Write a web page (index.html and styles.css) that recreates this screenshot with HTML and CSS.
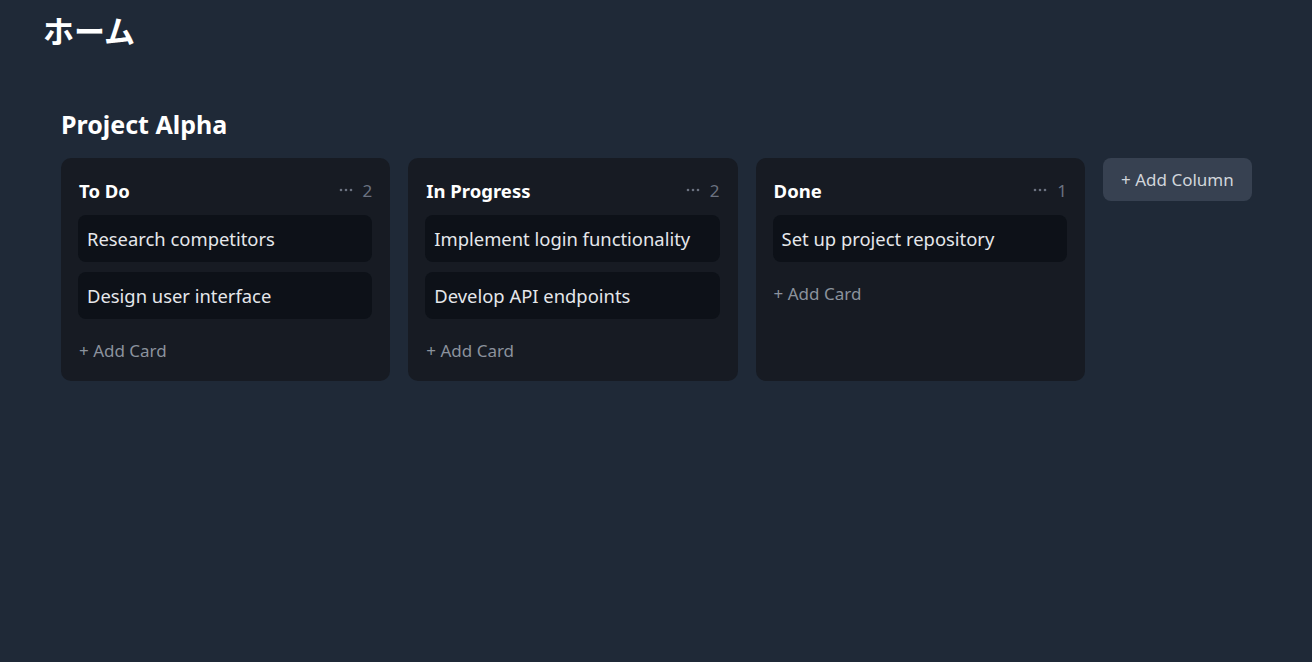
FILE: index.html
```html
<!DOCTYPE html>
<html lang="ja">
<head>
<meta charset="utf-8">
<title>ホーム</title>
<link rel="stylesheet" href="styles.css">
</head>
<body>
<header class="top">
  <h1 class="page-title">ホーム</h1>
</header>
<main class="board">
  <h2 class="board-title">Project Alpha</h2>
  <div class="columns">
    <section class="column">
      <div class="col-head">
        <span class="col-name">To Do</span>
        <span class="col-meta"><svg class="dots" width="14" height="4" viewBox="0 0 14 4"><circle cx="2" cy="2" r="1.3"/><circle cx="7" cy="2" r="1.3"/><circle cx="12" cy="2" r="1.3"/></svg><span class="count">2</span></span>
      </div>
      <div class="cards">
        <div class="card">Research competitors</div>
        <div class="card">Design user interface</div>
      </div>
      <div class="add-card">+ Add Card</div>
    </section>
    <section class="column">
      <div class="col-head">
        <span class="col-name">In Progress</span>
        <span class="col-meta"><svg class="dots" width="14" height="4" viewBox="0 0 14 4"><circle cx="2" cy="2" r="1.3"/><circle cx="7" cy="2" r="1.3"/><circle cx="12" cy="2" r="1.3"/></svg><span class="count">2</span></span>
      </div>
      <div class="cards">
        <div class="card">Implement login functionality</div>
        <div class="card">Develop API endpoints</div>
      </div>
      <div class="add-card">+ Add Card</div>
    </section>
    <section class="column">
      <div class="col-head">
        <span class="col-name">Done</span>
        <span class="col-meta"><svg class="dots" width="14" height="4" viewBox="0 0 14 4"><circle cx="2" cy="2" r="1.3"/><circle cx="7" cy="2" r="1.3"/><circle cx="12" cy="2" r="1.3"/></svg><span class="count">1</span></span>
      </div>
      <div class="cards">
        <div class="card">Set up project repository</div>
      </div>
      <div class="add-card">+ Add Card</div>
    </section>
    <button class="add-column">+ Add Column</button>
  </div>
</main>
</body>
</html>
```
FILE: styles.css
```css
html, body {
  margin: 0;
  padding: 0;
  background: #1f2937;
  color: #ffffff;
  font-family: "Noto Sans", "Noto Sans CJK JP", sans-serif;
}
body {
  height: 662px;
}
.top {
  padding: 6px 43px 0;
}
.page-title {
  margin: 0;
  font-family: "Noto Sans CJK JP", sans-serif;
  font-size: 31px;
  font-weight: 700;
  line-height: 48px;
}
.board {
  padding: 54px 61px 0;
}
.board-title {
  margin: 0 0 18px;
  font-size: 25px;
  font-weight: 700;
  line-height: 32px;
}
.columns {
  display: flex;
  align-items: flex-start;
  gap: 18px;
}
.column {
  width: 329.3px;
  flex-shrink: 0;
  box-sizing: border-box;
  height: 223px;
  background: #171b23;
  border-radius: 10px;
  padding: 18px 18px 16px 17px;
  display: flex;
  flex-direction: column;
}
.col-head {
  display: flex;
  justify-content: space-between;
  align-items: center;
  padding: 0 0 0 1px;
  height: 28px;
  margin-bottom: 11px;
}
.col-name {
  font-size: 18.5px;
  font-weight: 700;
  color: #ffffff;
}
.col-meta {
  display: flex;
  align-items: center;
  gap: 10px;
  color: #6b7280;
  font-size: 17px;
}
.dots {
  fill: #6b7280;
  display: block;
}
.count {
  color: #6b7280;
}
.cards {
  display: flex;
  flex-direction: column;
  gap: 10px;
}
.card {
  background: #0d1118;
  border-radius: 8px;
  height: 47px;
  box-sizing: border-box;
  padding: 0 9px;
  display: flex;
  align-items: center;
  font-size: 18.4px;
  color: #e5e7eb;
}
.add-card {
  margin-top: 20px;
  padding-left: 1px;
  font-size: 17px;
  color: #8b929d;
  line-height: 24px;
}
.add-column {
  flex-shrink: 0;
  white-space: nowrap;
  font-family: "Noto Sans", sans-serif;
  background: #374151;
  color: #d1d5db;
  border: none;
  border-radius: 8px;
  height: 43px;
  width: 149px;
  padding: 0;
  font-size: 17px;
  cursor: pointer;
}
```
